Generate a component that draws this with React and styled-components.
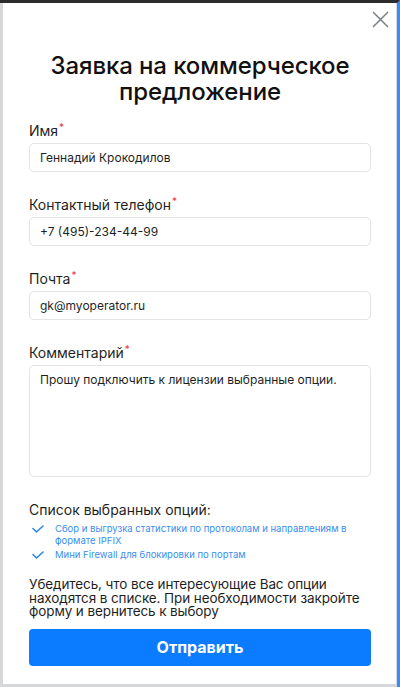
import React from "react";
import styled, { createGlobalStyle } from "styled-components";

const GlobalStyle = createGlobalStyle`
  html, body {
    margin: 0;
    padding: 0;
    height: 100%;
  }
  body {
    font-family: Inter, "Noto Sans", "Liberation Sans", sans-serif;
    color: #1f1f1f;
    background: #d6d7d9;
  }
  * {
    box-sizing: border-box;
  }
`;

const Backdrop = styled.div`
  height: 687px;
  padding: 0 1px 3px 3px;
  background: #d6d7d9;
  border-top: 3px solid #2b2b2b;
  border-right: 3px solid #3b8cf2;
`;

const Modal = styled.div`
  position: relative;
  height: 681px;
  background: #fff;
  padding: 50px 25px 18px 26px;
  display: flex;
  flex-direction: column;
`;

const CloseButton = styled.button`
  position: absolute;
  top: 7px;
  right: 7px;
  width: 18px;
  height: 18px;
  padding: 0;
  border: 0;
  background: transparent;
  cursor: pointer;
  display: grid;
  place-items: center;
`;

const Title = styled.h1`
  margin: 0 0 17px;
  font-size: 24px;
  line-height: 26px;
  font-weight: 500;
  text-align: center;
  color: #111;
  letter-spacing: -0.1px;
`;

const Field = styled.div`
  display: flex;
  flex-direction: column;
  gap: 4px;
  margin-bottom: 24px;
  flex: none;
`;

const Label = styled.label`
  font-size: 14px;
  line-height: 17px;
  color: #1f1f1f;
`;

const Required = styled.sup`
  color: #e8334a;
  font-size: 10px;
  line-height: 0;
  vertical-align: 5px;
  margin-left: 1px;
`;

const Input = styled.input`
  width: 100%;
  height: 29px;
  border: 1px solid #e3e3e8;
  border-radius: 5px;
  padding: 0 10px;
  font-family: inherit;
  font-size: 12px;
  color: #1f1f1f;
  background: #fff;
  outline: none;
`;

const TextArea = styled.textarea`
  width: 100%;
  height: 112px;
  border: 1px solid #e3e3e8;
  border-radius: 5px;
  padding: 6px 10px;
  font-family: inherit;
  font-size: 12px;
  line-height: 16px;
  color: #1f1f1f;
  resize: none;
  outline: none;
`;

const ListTitle = styled.div`
  font-size: 14px;
  line-height: 17px;
  margin-bottom: 5px;
`;

const OptionList = styled.ul`
  list-style: none;
  margin: 0 0 17px;
  padding: 0;
  display: flex;
  flex-direction: column;
  gap: 2px;
`;

const OptionItem = styled.li`
  display: flex;
  align-items: flex-start;
  gap: 11px;
  padding-left: 3px;
  font-size: 9.5px;
  line-height: 12px;
  color: #3a8ef0;
`;

const CheckIcon = styled.svg`
  flex: none;
  margin-top: 2px;
`;

const Note = styled.p`
  margin: 0 0 10px;
  font-size: 13.5px;
  line-height: 13.5px;
  letter-spacing: -0.1px;
  color: #1f1f1f;
`;

const SubmitButton = styled.button`
  flex: none;
  width: 100%;
  height: 37px;
  border: 0;
  border-radius: 4px;
  background: #0b7cff;
  color: #fff;
  font-family: inherit;
  font-size: 16px;
  font-weight: 700;
  cursor: pointer;
`;

const Check = () => (
  <CheckIcon width="12" height="8" viewBox="0 0 12 8">
    <path
      d="M1 3.5l3.5 3.5L11 1"
      fill="none"
      stroke="#2a85ef"
      strokeWidth="1.6"
      strokeLinecap="round"
      strokeLinejoin="round"
    />
  </CheckIcon>
);

const fields = [
  { label: "Имя", value: "Геннадий Крокодилов" },
  { label: "Контактный телефон", value: "+7 (495)-234-44-99" },
  { label: "Почта", value: "gk@myoperator.ru" },
];

const options = [
  "Сбор и выгрузка статистики по протоколам и направлениям в формате IPFIX",
  "Мини Firewall для блокировки по портам",
];

export default function App() {
  return (
    <>
      <GlobalStyle />
      <Backdrop>
        <Modal>
          <CloseButton aria-label="Закрыть">
            <svg width="17" height="17" viewBox="0 0 17 17">
              <path
                d="M1 1l15 15M16 1L1 16"
                stroke="#7b7f86"
                strokeWidth="1.5"
              />
            </svg>
          </CloseButton>
          <Title>
            Заявка на коммерческое
            <br />
            предложение
          </Title>
          {fields.map((f) => (
            <Field key={f.label}>
              <Label>
                {f.label}
                <Required>*</Required>
              </Label>
              <Input defaultValue={f.value} />
            </Field>
          ))}
          <Field>
            <Label>
              Комментарий<Required>*</Required>
            </Label>
            <TextArea defaultValue="Прошу подключить к лицензии выбранные опции." />
          </Field>
          <ListTitle>Список выбранных опций:</ListTitle>
          <OptionList>
            {options.map((o) => (
              <OptionItem key={o}>
                <Check />
                <span>{o}</span>
              </OptionItem>
            ))}
          </OptionList>
          <Note>
            Убедитесь, что все интересующие Вас опции находятся в списке. При
            необходимости закройте форму и вернитесь к выбору
          </Note>
          <SubmitButton>Отправить</SubmitButton>
        </Modal>
      </Backdrop>
    </>
  );
}
